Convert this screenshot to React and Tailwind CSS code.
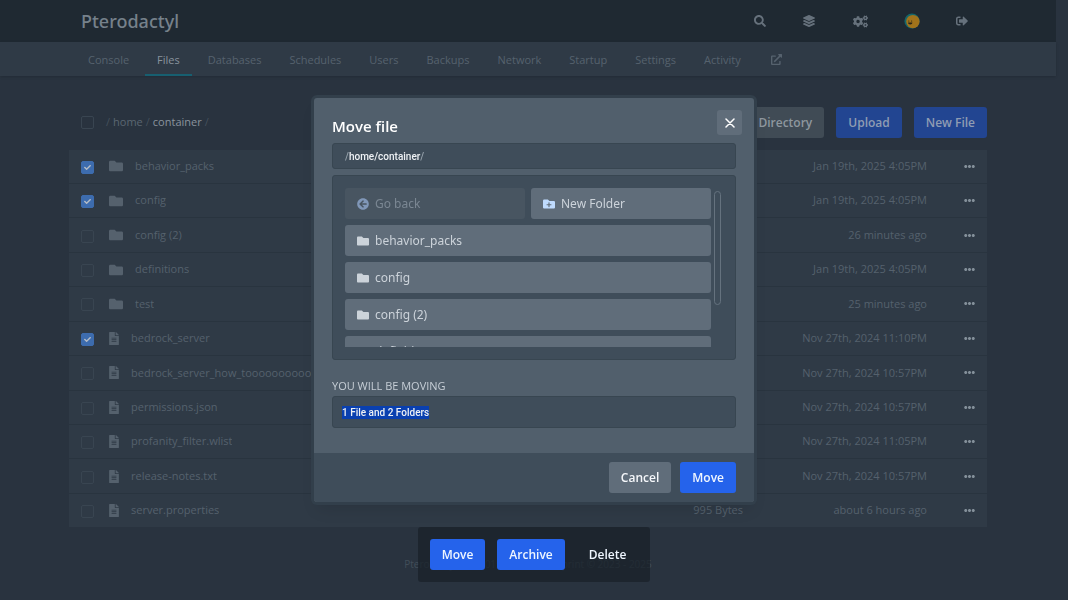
import React from 'react';
import clsx from 'clsx';
import {
  FaArrowCircleLeft,
  FaCheck,
  FaCogs,
  FaEllipsisH,
  FaExternalLinkAlt,
  FaFileAlt,
  FaFolder,
  FaFolderPlus,
  FaLayerGroup,
  FaSearch,
  FaSignOutAlt,
} from 'react-icons/fa';

const tabs = ['Console', 'Files', 'Databases', 'Schedules', 'Users', 'Backups', 'Network', 'Startup', 'Settings', 'Activity'];

const files = [
  { name: 'behavior_packs', folder: true, checked: true, date: 'Jan 19th, 2025 4:05PM' },
  { name: 'config', folder: true, checked: true, date: 'Jan 19th, 2025 4:05PM' },
  { name: 'config (2)', folder: true, date: '26 minutes ago' },
  { name: 'definitions', folder: true, date: 'Jan 19th, 2025 4:05PM' },
  { name: 'test', folder: true, date: '25 minutes ago' },
  { name: 'bedrock_server', checked: true, date: 'Nov 27th, 2024 11:10PM' },
  { name: 'bedrock_server_how_toooooooooooooo.html', date: 'Nov 27th, 2024 10:57PM' },
  { name: 'permissions.json', date: 'Nov 27th, 2024 10:57PM' },
  { name: 'profanity_filter.wlist', date: 'Nov 27th, 2024 11:05PM' },
  { name: 'release-notes.txt', date: 'Nov 27th, 2024 10:57PM' },
  { name: 'server.properties', size: '995 Bytes', date: 'about 6 hours ago' },
];

const folders = ['behavior_packs', 'config', 'config (2)', 'definitions'];

function Button({ className, children }) {
  return (
    <button className={clsx('h-[31px] rounded-[3px] px-3 text-[12px] font-semibold whitespace-nowrap', className)}>
      {children}
    </button>
  );
}

function Checkbox({ label, checked }) {
  return (
    <label className="relative block h-[13px] w-[13px]">
      <input
        type="checkbox"
        aria-label={label}
        defaultChecked={checked}
        className="peer block h-[13px] w-[13px] appearance-none rounded-[2px] border border-[#394551] checked:border-[#3d6cae] checked:bg-[#3d6cae]"
      />
      <FaCheck className="pointer-events-none absolute top-[3px] left-[3px] hidden h-[7px] w-[7px] text-[#b4bcc6] peer-checked:block" />
    </label>
  );
}

function Avatar() {
  return (
    <svg viewBox="0 0 16 16" className="h-4 w-4">
      <circle cx="8" cy="8" r="7.6" fill="#14666b" />
      <circle cx="8.9" cy="8.6" r="6.7" fill="#a1731b" />
      <circle cx="4.8" cy="8" r="0.6" fill="#2b2618" />
      <circle cx="7.6" cy="8" r="0.6" fill="#2b2618" />
      <path d="M4 9.600h4.400c0 1.200-.9 1.900-2.200 1.900S4 10.800 4 9.600z" fill="#2b2618" />
    </svg>
  );
}

function Header() {
  const item = 'flex h-[42px] items-center justify-center';
  return (
    <header className="bg-[#1f2932] text-[#66717c]">
      <div className="mx-auto flex max-w-[918px] items-center justify-between">
        <a href="#" className="px-3 font-['Noto_Sans'] text-[18px] leading-6 font-medium text-[#76818b]">Pterodactyl</a>
        <nav className="flex">
          <button aria-label="Search" className={clsx(item, 'w-[49px]')}><FaSearch className="h-3 w-3" /></button>
          <a href="#" aria-label="Servers" className={clsx(item, 'w-[50px]')}><FaLayerGroup className="h-3 w-3" /></a>
          <a href="#" aria-label="Admin" className={clsx(item, 'w-[52px]')}><FaCogs className="h-[15px] w-[15px]" /></a>
          <a href="#" aria-label="Account" className={clsx(item, 'w-[51px]')}><Avatar /></a>
          <button aria-label="Sign out" className={clsx(item, 'w-[50px]')}><FaSignOutAlt className="h-3 w-3" /></button>
        </nav>
      </div>
    </header>
  );
}

function SubNavigation() {
  return (
    <div className="bg-[#2f3a46] shadow">
      <nav className="mx-auto flex max-w-[918px] gap-1 px-[7px] text-[11px] text-[#56626e]">
        {tabs.map((tab) => (
          <a
            key={tab}
            href="#"
            className={clsx('flex h-[34px] items-center border-b-2 px-3 pt-1', tab === 'Files' ? 'border-[#175f70] text-[#89939d]' : 'border-transparent')}
          >
            {tab}
          </a>
        ))}
        <a href="#" aria-label="Open in admin" className="flex h-[34px] items-center px-[14px]"><FaExternalLinkAlt className="h-[11px] w-[11px]" /></a>
      </nav>
    </div>
  );
}

function FileTable() {
  return (
    <table className="mt-3 h-[377px] w-full table-fixed border-collapse text-[11px] text-[#55616d]">
      <colgroup>
        <col className="w-10" />
        <col />
        <col className="w-40" />
        <col className="w-[184px]" />
        <col className="w-[60px]" />
      </colgroup>
      <tbody>
        {files.map((file) => (
          <tr key={file.name} className="border-b border-[#29343f] bg-[#2f3a46] last:border-b-0">
            <td className="pt-[2px] pl-3"><Checkbox label={`Select ${file.name}`} checked={file.checked} /></td>
            <td>
              <a href="#" className="flex items-center gap-3">
                {file.folder ? <FaFolder className="h-[14px] w-[14px] shrink-0" /> : <FaFileAlt className="h-[13px] w-[10px] shrink-0" />}
                <span className="truncate">{file.name}</span>
              </a>
            </td>
            <td className="text-right">{file.size}</td>
            <td className="text-right">{file.date}</td>
            <td className="pr-3">
              <button aria-label={`Actions for ${file.name}`} className="ml-auto block text-[#84909a]"><FaEllipsisH className="h-[11px] w-[11px]" /></button>
            </td>
          </tr>
        ))}
      </tbody>
    </table>
  );
}

function MoveDialog() {
  const field = 'rounded-[3px] border border-[#384651] bg-[#3f4d5a]';
  return (
    <div className="fixed inset-0 flex items-center justify-center">
      <div
        role="dialog"
        aria-labelledby="move-title"
        className="w-full max-w-[440px] overflow-hidden rounded-[3px] bg-[#515f6c] shadow-lg ring-3 ring-[#323f4b]"
      >
        <div className="px-[18px] pb-[25px]">
          <div className="flex h-[45px] items-center justify-between pt-3">
            <h2 id="move-title" className="text-[15px] font-semibold text-white">Move file</h2>
            <button aria-label="Close" className="-mr-[6px] mb-2 flex h-[25px] w-[25px] items-center justify-center rounded-[3px] bg-[#606d7a]">
              <svg viewBox="0 0 10 10" className="h-[10px] w-[10px] stroke-white" strokeWidth="1.5" strokeLinecap="round">
                <path d="M1 1l8 8M9 1l-8 8" />
              </svg>
            </button>
          </div>
          <div className={clsx(field, "flex h-[26px] items-center px-3 font-['Roboto'] text-[10px] font-medium text-[#eef1f4]")}>
            <span className="text-[#96a1ab]">/</span>home/container<span className="text-[#96a1ab]">/</span>
          </div>
          <div className={clsx(field, 'mt-[6px] flex p-3')}>
            <div className="grid h-[159px] flex-1 auto-rows-[31px] grid-cols-2 gap-[6px] overflow-hidden font-['Noto_Sans'] text-[12px] text-[#ccd3da]">
              <button disabled className="flex items-center gap-[6px] rounded-[3px] bg-[#485561] px-3 text-[#7b8793]">
                <FaArrowCircleLeft className="h-3 w-3 text-[#8097b8]" />
                Go back
              </button>
              <button className="flex items-center gap-[6px] rounded-[3px] bg-[#606d7a] px-3">
                <FaFolderPlus className="h-3 w-3 text-[#bfdbfe]" />
                New Folder
              </button>
              {folders.map((name) => (
                <button key={name} className="col-span-2 flex items-center gap-[6px] rounded-[3px] bg-[#606d7a] px-3">
                  <FaFolder className="h-3 w-3" />
                  {name}
                </button>
              ))}
            </div>
            <div className="mt-[3px] mr-[2px] ml-[3px] h-[114px] w-[7px] rounded-full border border-[#65727e]" />
          </div>
          <p className="mt-[17px] text-[11px] leading-[18px] text-[#c6ced6] uppercase">You will be moving</p>
          <div className={clsx(field, 'mt-px flex h-8 items-center px-[9px]')}>
            <span className="bg-[#0a40b0] font-['Roboto'] text-[10px] leading-[13px] font-medium text-[#eef1f4]">1 File and 2 Folders</span>
          </div>
        </div>
        <div className="flex justify-end gap-[9px] bg-[#3f4d5a] px-[18px] py-[9px]">
          <Button className="bg-[#606d7a] text-[#f5f7fa]">Cancel</Button>
          <Button className="bg-[#2563eb] text-[#eff6ff]">Move</Button>
        </div>
      </div>
    </div>
  );
}

export default function App() {
  return (
    <div className="min-h-screen bg-[#29333f] pr-3 font-['Open_Sans',sans-serif]">
      <Header />
      <SubNavigation />
      <main className="mx-auto max-w-[918px] pt-[31px]">
        <div className="flex items-center justify-between">
          <div className="flex items-center gap-3 pl-3 text-[11px] text-[#5b6772]">
            <Checkbox label="Select all files" />
            <div className="flex gap-[3px]">
              <span className="text-[#44505c]">/</span>
              <a href="#">home</a>
              <span className="text-[#44505c]">/</span>
              <a href="#" className="text-[#89939d]">container</a>
              <span className="text-[#44505c]">/</span>
            </div>
          </div>
          <div className="flex gap-3">
            <Button className="bg-[#404b55] text-[#8e979f]">Create Directory</Button>
            <Button className="bg-[#224591] text-[#8f9cb3]">Upload</Button>
            <Button className="bg-[#224591] text-[#8f9cb3]">New File</Button>
          </div>
        </div>
        <FileTable />
        <footer className="pt-[29px] text-center text-[10px] leading-4 text-[#424e59]">
          <a href="#">Pterodactyl®</a> © 2015 - 2025 · <a href="#">Blueprint</a> © 2023 - 2025
        </footer>
      </main>
      <MoveDialog />
      <div className="pointer-events-none fixed inset-x-0 bottom-[18px] flex justify-center">
        <div className="pointer-events-auto flex gap-3 rounded-[3px] bg-[#1a222a]/75 p-3">
          <Button className="bg-[#2563eb] text-[#eff6ff]">Move</Button>
          <Button className="bg-[#2563eb] text-[#eff6ff]">Archive</Button>
          <Button className="text-[#eff6ff]">Delete</Button>
        </div>
      </div>
    </div>
  );
}
